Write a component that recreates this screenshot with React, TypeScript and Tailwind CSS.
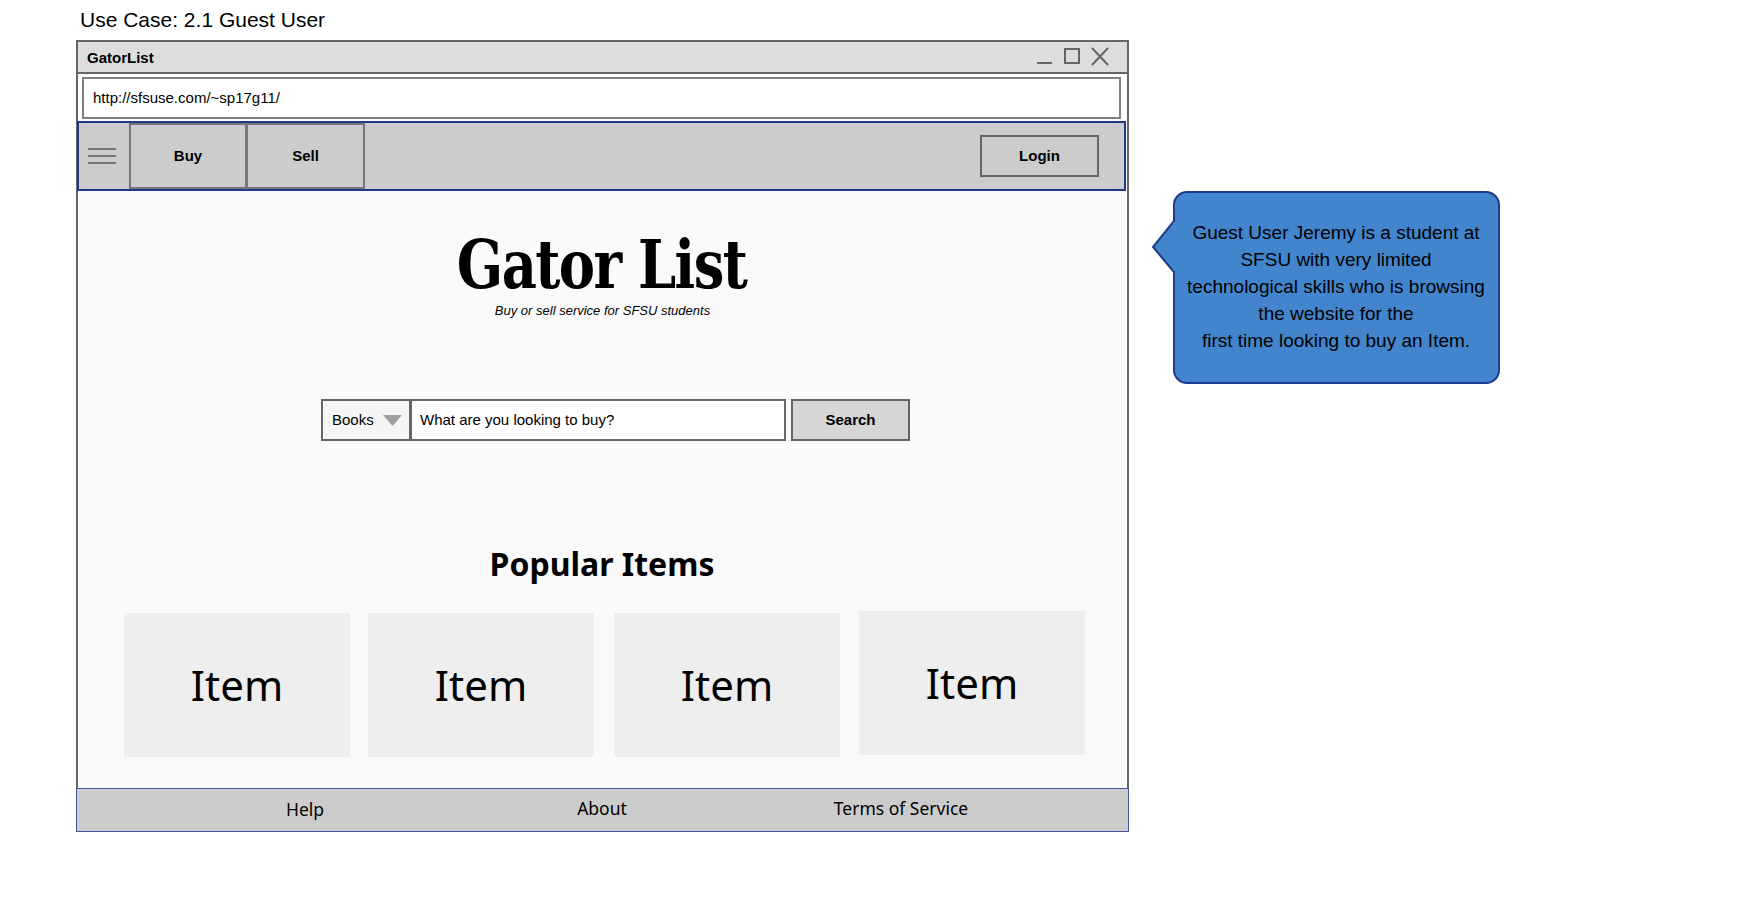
const sans = "font-['Liberation_Sans',Arial,sans-serif]";
const ub = "font-['Noto_Sans','Open_Sans',sans-serif]";

function Item({ cls }: { cls: string }) {
  return (
    <div className={`flex h-[144px] w-[226px] items-center justify-center bg-[#eeeeee] text-[42px] text-black ${cls}`}>
      <span className="pb-[2px]">Item</span>
    </div>
  );
}

export default function App() {
  return (
    <div className={`flex h-[899px] w-[1747px] items-start overflow-hidden bg-white pl-[76px] text-black ${sans}`}>
      <div className="flex w-[1053px] shrink-0 flex-col">
        <div className="flex h-[40px] items-center pb-[2px] pl-[4px] text-[21px] leading-none">Use Case: 2.1 Guest User</div>
        <div className="flex h-[792px] flex-col border-x-2 border-t-2 border-[#666666] bg-[#fafafa]">
          <div className="flex h-[32px] shrink-0 items-center justify-between border-b-2 border-[#666666] bg-[#dddddd] pl-[9px] pr-[9px]">
            <span className="pt-[3px] text-[15px] font-bold">GatorList</span>
            <svg width="80" height="20" viewBox="0 0 80 20" fill="none" stroke="#666666" strokeWidth="2" className="mr-[1px] overflow-visible">
              <path d="M0 16H15" />
              <rect x="28" y="2" width="14" height="14" />
              <path d="M55 1 71 18M71 1 55 18" />
            </svg>
          </div>
          <div className="shrink-0 bg-white pb-[2px] pl-[4px] pr-[6px] pt-[3px]">
            <div className="flex h-[42px] items-center border-2 border-[#808080] bg-white pl-[9px] text-[15px]">http://sfsuse.com/~sp17g11/</div>
          </div>
          <div className="ml-[-1px] mr-[1px] flex h-[70px] shrink-0 items-center border-2 border-[#1f3a8a] bg-[#cccccc]">
            <div className="flex w-[50px] shrink-0 flex-col gap-[5px] pl-[9px]">
              <div className="h-[2px] w-[28px] bg-[#777777]" />
              <div className="h-[2px] w-[28px] bg-[#777777]" />
              <div className="h-[2px] w-[28px] bg-[#777777]" />
            </div>
            <div className="flex h-[66px] w-[118px] shrink-0 items-center justify-center border-2 border-[#777777] text-[15px] font-bold">Buy</div>
            <div className="ml-[-1px] flex h-[66px] w-[119px] shrink-0 items-center justify-center border-2 border-[#777777] text-[15px] font-bold">Sell</div>
            <div className="ml-auto mr-[25px] flex h-[42px] w-[119px] items-center justify-center border-2 border-[#666666] text-[15px] font-bold">Login</div>
          </div>

          <div className="flex grow flex-col">
            <div className="mt-[33px] mr-[2px] scale-x-[0.8] text-center font-['DejaVu_Serif',serif] text-[68px] font-bold leading-[80px] tracking-[-2px]">Gator List</div>
            <div className="mt-[-3px] text-center text-[13px] italic leading-[20px]">Buy or sell service for SFSU students</div>

            <div className="ml-[243px] mt-[78px] flex h-[42px] w-[589px] items-stretch">
              <div className="flex w-[90px] shrink-0 items-center justify-between border-2 border-[#666666] bg-[#f5f5f5] pl-[9px] pr-[7px] text-[15px]">
                <span>Books</span>
                <svg width="19" height="11" viewBox="0 0 19 11"><path d="M0 0H19L9.5 11Z" fill="#a0a0a0" /></svg>
              </div>
              <div className="ml-[-1px] flex w-[376px] shrink-0 items-center border-2 border-[#666666] bg-white pl-[8px] text-[15px]">What are you looking to buy?</div>
              <div className="ml-[5px] flex w-[119px] shrink-0 items-center justify-center border-2 border-[#666666] bg-[#d6d6d6] pt-[1px] text-[15px] font-bold">Search</div>
            </div>

            <div className={`mt-[101px] mr-[1px] text-center text-[32px] font-bold leading-[44px] ${ub}`}>Popular Items</div>

            <div className={`ml-[46px] mt-[27px] flex items-start ${ub}`}>
              <Item cls="" />
              <Item cls="ml-[18px]" />
              <Item cls="ml-[20px]" />
              <Item cls="ml-[19px] mt-[-2px]" />
            </div>
          </div>

          <div className={`mx-[-2px] flex h-[44px] shrink-0 items-center border border-[#43569c] bg-[#cccccc] pb-[3px] text-[17.5px] ${ub}`}>
            <span className="ml-[198px] w-[60px] pt-[1px] text-center">Help</span>
            <span className="ml-[237px] w-[60px] text-center">About</span>
            <span className="ml-[179px] w-[180px] text-center">Terms of Service</span>
          </div>
        </div>
      </div>

      <div className="relative ml-[44px] mt-[191px] flex h-[193px] w-[327px] shrink-0 flex-col items-center justify-center rounded-[14px] border-2 border-[#1f3a8a] bg-[#4285cc] pb-[3px] pr-[1px] text-center text-[19px] leading-[27px]">
        <svg width="24" height="56" viewBox="0 0 24 56" className="absolute left-[-24px] top-[26px]">
          <path d="M23 2 2 28 23 53" fill="#4285cc" stroke="#1f3a8a" strokeWidth="2" />
          <rect x="22" y="3" width="2" height="49" fill="#4285cc" />
        </svg>
        <div>Guest User Jeremy is a student at</div>
        <div>SFSU with very limited</div>
        <div>technological skills who is browsing</div>
        <div>the website for the</div>
        <div>first time looking to buy an Item.</div>
      </div>
    </div>
  );
}
